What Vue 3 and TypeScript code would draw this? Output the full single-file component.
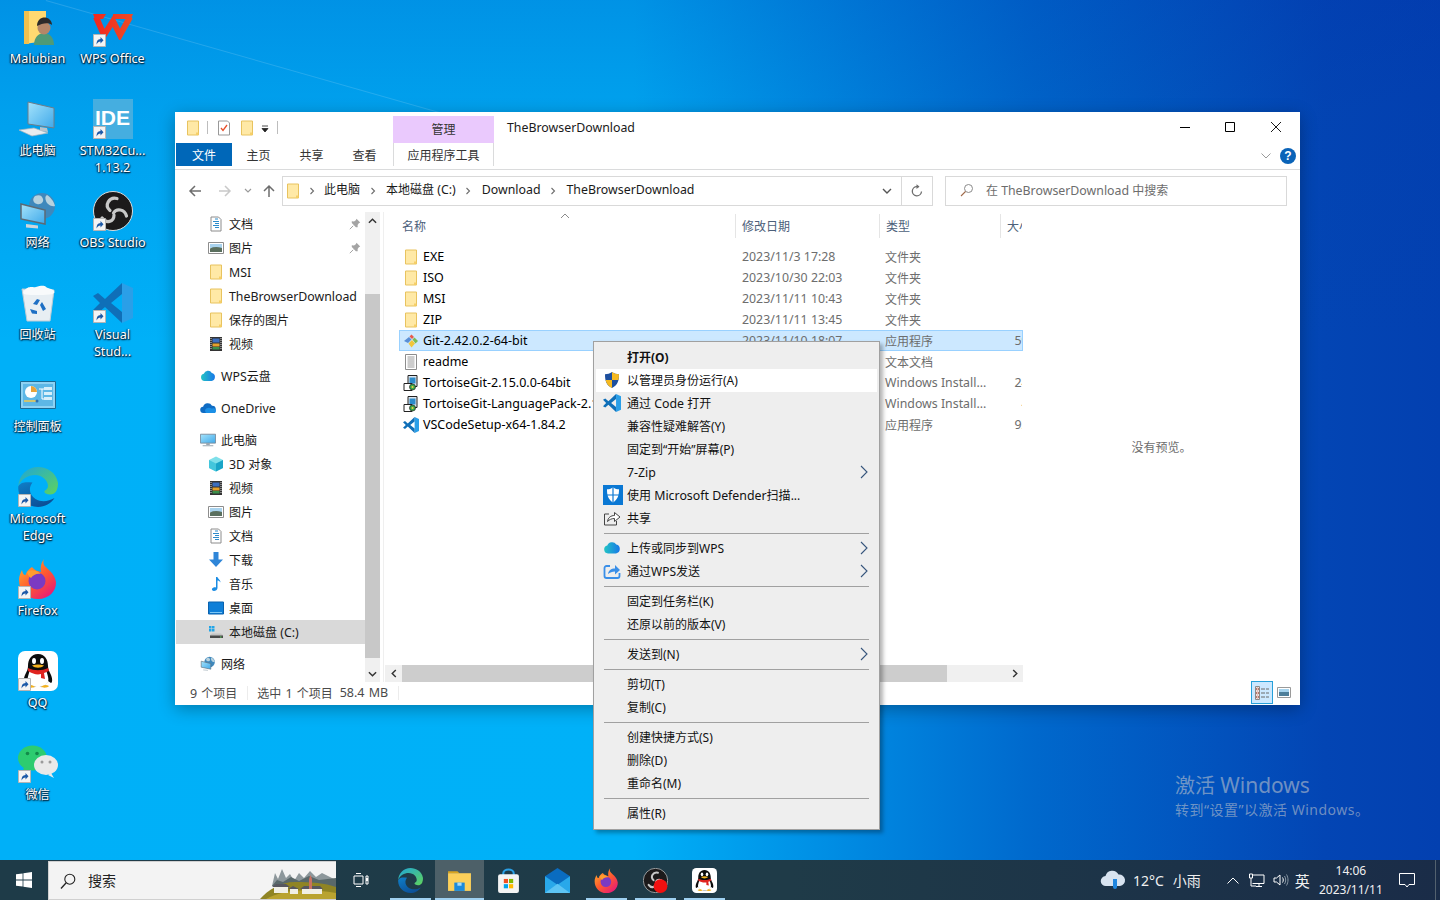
<script setup lang="ts">
interface DeskIcon { icon: string; label: string; link?: boolean }
interface NavItem { icon: string; label: string; level: number; gap?: boolean; pin?: boolean; active?: boolean }
interface FileRow { icon: string; name: string; date: string; type: string; size: string; selected?: boolean }
interface MenuItem { label?: string; icon?: string; bold?: boolean; hot?: boolean; more?: boolean; sep?: boolean }

const desktopIcons: DeskIcon[] = [
  { icon: "user-folder", label: "Malubian" },
  { icon: "pc", label: "此电脑" },
  { icon: "network", label: "网络" },
  { icon: "recycle", label: "回收站" },
  { icon: "control", label: "控制面板" },
  { icon: "edge", label: "Microsoft\nEdge", link: true },
  { icon: "firefox", label: "Firefox", link: true },
  { icon: "qq", label: "QQ", link: true },
  { icon: "wechat", label: "微信", link: true },
  { icon: "wps", label: "WPS Office", link: true },
  { icon: "ide", label: "STM32Cu...\n1.13.2", link: true },
  { icon: "obs", label: "OBS Studio", link: true },
  { icon: "vscode", label: "Visual\nStud...", link: true },
];

const navItems: NavItem[] = [
  { icon: "doc", label: "文档", level: 1, pin: true },
  { icon: "picture", label: "图片", level: 1, pin: true },
  { icon: "folder", label: "MSI", level: 1 },
  { icon: "folder", label: "TheBrowserDownload", level: 1 },
  { icon: "folder", label: "保存的图片", level: 1 },
  { icon: "film", label: "视频", level: 1 },
  { icon: "wps-cloud", label: "WPS云盘", level: 0, gap: true },
  { icon: "onedrive", label: "OneDrive", level: 0, gap: true },
  { icon: "pc-small", label: "此电脑", level: 0, gap: true },
  { icon: "cube", label: "3D 对象", level: 1 },
  { icon: "film", label: "视频", level: 1 },
  { icon: "picture", label: "图片", level: 1 },
  { icon: "doc", label: "文档", level: 1 },
  { icon: "download", label: "下载", level: 1 },
  { icon: "music", label: "音乐", level: 1 },
  { icon: "desk", label: "桌面", level: 1 },
  { icon: "drive", label: "本地磁盘 (C:)", level: 1, active: true },
  { icon: "network", label: "网络", level: 0, gap: true },
];

const files: FileRow[] = [
  { icon: "folder", name: "EXE", date: "2023/11/3 17:28", type: "文件夹", size: "" },
  { icon: "folder", name: "ISO", date: "2023/10/30 22:03", type: "文件夹", size: "" },
  { icon: "folder", name: "MSI", date: "2023/11/11 10:43", type: "文件夹", size: "" },
  { icon: "folder", name: "ZIP", date: "2023/11/11 13:45", type: "文件夹", size: "" },
  { icon: "git", name: "Git-2.42.0.2-64-bit", date: "2023/11/10 18:07", type: "应用程序", size: "59,802 KB", selected: true },
  { icon: "txt", name: "readme", date: "2023/11/10 18:07", type: "文本文档", size: "1 KB" },
  { icon: "msi", name: "TortoiseGit-2.15.0.0-64bit", date: "2023/11/10 18:07", type: "Windows Install...", size: "24,128 KB" },
  { icon: "msi", name: "TortoiseGit-LanguagePack-2.15.0.0-64bit", date: "2023/11/10 18:07", type: "Windows Install...", size: "4,096 KB" },
  { icon: "vscode", name: "VSCodeSetup-x64-1.84.2", date: "2023/11/10 18:07", type: "应用程序", size: "92,345 KB" },
];

const menu: MenuItem[] = [
  { label: "打开(O)", bold: true },
  { label: "以管理员身份运行(A)", icon: "uac", hot: true },
  { label: "通过 Code 打开", icon: "vscode" },
  { label: "兼容性疑难解答(Y)" },
  { label: "固定到“开始”屏幕(P)" },
  { label: "7-Zip", more: true },
  { label: "使用 Microsoft Defender扫描...", icon: "defender" },
  { label: "共享", icon: "share" },
  { sep: true },
  { label: "上传或同步到WPS", icon: "wps-cloud", more: true },
  { label: "通过WPS发送", icon: "wps-send", more: true },
  { sep: true },
  { label: "固定到任务栏(K)" },
  { label: "还原以前的版本(V)" },
  { sep: true },
  { label: "发送到(N)", more: true },
  { sep: true },
  { label: "剪切(T)" },
  { label: "复制(C)" },
  { sep: true },
  { label: "创建快捷方式(S)" },
  { label: "删除(D)" },
  { label: "重命名(M)" },
  { sep: true },
  { label: "属性(R)" },
];

const taskApps = [
  { icon: "edge", on: true },
  { icon: "explorer", on: true, active: true },
  { icon: "store", on: false },
  { icon: "mail", on: false },
  { icon: "firefox", on: true },
  { icon: "obs-rec", on: true },
  { icon: "qq", on: true },
];

// latin runs are a little larger than the CJK ones, as in YaHei UI
function parts(text: string) {
  const out: { t: string; lat: boolean }[] = [];
  for (const m of text.match(/[\x20-\x7e]+|[^\x20-\x7e]+/g) ?? []) {
    out.push({ t: m, lat: /^[\x20-\x7e]/.test(m) });
  }
  return out;
}
</script>

<template>
  <div class="desktop">
    <svg class="defs" aria-hidden="true">
      <defs>
        <linearGradient id="gEdge1" x1="0" y1="0" x2="1" y2="1"><stop offset="0" stop-color="#1fa6d8" /><stop offset="1" stop-color="#5fd35c" /></linearGradient>
        <linearGradient id="gEdge2" x1="0" y1="0" x2="0.6" y2="1"><stop offset="0" stop-color="#0f7fc8" /><stop offset="1" stop-color="#0c4f96" /></linearGradient>
        <linearGradient id="gFox" x1="0" y1="0" x2="0.8" y2="1"><stop offset="0" stop-color="#ffbd2e" /><stop offset="0.55" stop-color="#ff5a2e" /><stop offset="1" stop-color="#e6197a" /></linearGradient>
        <linearGradient id="gWps" x1="0" y1="0" x2="1" y2="0"><stop offset="0" stop-color="#f2281e" /><stop offset="1" stop-color="#ee4a26" /></linearGradient>
        <linearGradient id="gScreen" x1="0" y1="0" x2="1" y2="1"><stop offset="0" stop-color="#a5e3fb" /><stop offset="1" stop-color="#3fa9ea" /></linearGradient>
        <linearGradient id="gCloud" x1="0" y1="0" x2="1" y2="0"><stop offset="0" stop-color="#22c4c4" /><stop offset="1" stop-color="#1878e8" /></linearGradient>
      </defs>

      <symbol id="folder" viewBox="0 0 16 16">
        <path d="M2.500 1h11v14h-11z" fill="#ffe9a6" stroke="#e8c35f" />
        <path d="M11 12.500h2.500V15H11z" fill="#f6cf68" />
      </symbol>
      <symbol id="doc" viewBox="0 0 16 16">
        <path d="M3 1h7.500L13 3.500V15H3z" fill="#fff" stroke="#8c8c8c" />
        <path d="M7 3h3M5 5.500h6M7 7.500h4M5 9.500h6M7 11.500h4" stroke="#2d8ccb" />
      </symbol>
      <symbol id="picture" viewBox="0 0 16 16">
        <path d="M.5 2.500h15v11H.5z" fill="#fff" stroke="#8d8d8d" />
        <path d="M2 4h12v4H2z" fill="#a9d3ee" />
        <path d="M2 8.500q5-2.500 12-.5v4H2z" fill="#5a6f5e" />
      </symbol>
      <symbol id="film" viewBox="0 0 16 16">
        <path d="M2 1h12v14H2z" fill="#333" />
        <path d="M4.500 2.500h7v4h-7z" fill="#3c6fc0" />
        <path d="M4.500 7.500h7v3h-7z" fill="#e6a22c" />
        <path d="M4.500 11h7v2.500h-7z" fill="#3b8f4a" />
        <path d="M3 2v12" stroke="#ddd" stroke-dasharray="1 1" />
        <path d="M13 2v12" stroke="#ddd" stroke-dasharray="1 1" />
      </symbol>
      <symbol id="wps-cloud" viewBox="0 0 18 14">
        <path d="M5 12.500a4 4 0 0 1-.7-7.900 5 5 0 0 1 9-1.100 4.600 4.600 0 0 1-.3 9z" fill="url(#gCloud)" />
      </symbol>
      <symbol id="onedrive" viewBox="0 0 18 14">
        <path d="M4 12.500a3.500 3.500 0 0 1-.5-7 5.500 5.500 0 0 1 10-1 4 4 0 0 1 .5 8z" fill="#0f6cc4" />
        <path d="M7 12.500a3 3 0 0 1 0-5 6 6 0 0 1 6 0h1a3 3 0 0 1 3 5z" fill="#1b8fe6" />
      </symbol>
      <symbol id="pc-small" viewBox="0 0 18 16">
        <path d="M.5 1.500h17v10H.5z" fill="url(#gScreen)" stroke="#7a8b99" />
        <path d="M7 11.500h4v2H7zM3 14h12v1H3z" fill="#9aa6b0" />
      </symbol>
      <symbol id="cube" viewBox="0 0 16 16">
        <path d="M8 .5 15 4v8l-7 3.500L1 12V4z" fill="#7fe0ea" />
        <path d="M8 7.500 15 4v8l-7 3.500z" fill="#19a5c8" />
        <path d="M8 7.500v8L1 12V4z" fill="#43c6dc" />
      </symbol>
      <symbol id="download" viewBox="0 0 16 16">
        <path d="M5.500 0h5v7.500H15L8 15 1 7.500h4.500z" fill="#2f86d8" />
      </symbol>
      <symbol id="music" viewBox="0 0 16 16">
        <path d="M8 1h1.500c.3 2 3 2.500 3 5.500-1-1.500-2-2-3-2v7.500c0 2-2 3-3.500 3S3.500 14 4 12.800c.5-1 2.500-1.800 4-1.300z" fill="#1b8ce3" />
      </symbol>
      <symbol id="desk" viewBox="0 0 16 16">
        <path d="M.5 2h15v12H.5z" fill="#0f7fd8" stroke="#0a62ae" />
        <path d="M2 12.500h12" stroke="#7cc7f5" />
      </symbol>
      <symbol id="drive" viewBox="0 0 16 16">
        <path d="M1 2h2.500v2.500H1zM4 2h2.500v2.500H4zM1 5h2.500v2.500H1zM4 5h2.500v2.500H4z" fill="#22a5e8" />
        <path d="M2 11l2-1.500h9l2 1.500v3H2z" fill="#c4c4c4" />
        <path d="M2 11.500h13V14H2z" fill="#4a4a4a" />
        <path d="M12 12.500h1.500v1H12z" fill="#5ad45a" />
      </symbol>
      <symbol id="git" viewBox="0 0 16 16">
        <path d="M8.500 1.500 11 4 9 6 6.500 3.500z" fill="#e85a4a" />
        <path d="M11.500 4.500 15 8l-2.500 2.500L9.500 6.500z" fill="#7dbb55" />
        <path d="M6 4 8.500 6.500 5 10 1 8z" fill="#5a8fd6" />
        <path d="M9 7l3 3.500L8.500 14.500 5.500 10.500z" fill="#f2c63c" />
      </symbol>
      <symbol id="txt" viewBox="0 0 16 16">
        <path d="M2.500 .5h11v15h-11z" fill="#fff" stroke="#8c8c8c" />
        <path d="M4.500 3h7M4.500 5h7M4.500 7h7M4.500 9h7M4.500 11h7M4.500 13h7" stroke="#9a9a9a" />
      </symbol>
      <symbol id="msi" viewBox="0 0 16 16">
        <path d="M5 .5h9v11H5z" fill="#dfe6ee" stroke="#222" />
        <path d="M6.500 2.500h6v6h-6z" fill="#2d8ccb" />
        <path d="M1 8.500h8v7H1z" fill="#fff" stroke="#222" />
        <circle cx="9.500" cy="12" r="3" fill="#3ea84a" stroke="#222" stroke-width=".7" />
        <circle cx="9.500" cy="12" r="1" fill="#f4d03f" />
      </symbol>
      <symbol id="vscode" viewBox="0 0 40 40">
        <path d="M29 0 40 5v30l-11 5z" fill="#2a9fe8" />
        <path d="M29 0 12 16 5 10 0 13l7 7-7 7 5 3 7-6 17 16V29L18 20l11-9z" fill="#0f6fb8" />
      </symbol>
      <symbol id="uac" viewBox="0 0 18 18">
        <path d="M9 1c2.200 1.600 4.500 2.200 7 2.200 0 6-1 10.800-7 13.800C3 14 2 9.200 2 3.200 4.500 3.200 6.800 2.600 9 1z" fill="#1d4f9e" />
        <path d="M9 1c2.200 1.600 4.500 2.200 7 2.200 0 2-.1 3.900-.6 5.800H9zM9 9v8c-3.200-1.600-5-3.700-5.900-6.200L2.600 9z" fill="#f5b921" />
      </symbol>
      <symbol id="defender" viewBox="0 0 20 20">
        <path d="M0 0h20v20H0z" fill="#0a78d4" />
        <path d="M10 2.500c2 1.300 4 1.800 6 1.800 0 5.500-.8 10-6 13.200C4.800 14.300 4 9.800 4 4.300c2 0 4-.5 6-1.800z" fill="#fff" />
        <path d="M9.400 2.500h1.200v15H9.400zM4 9.400h12v1.200H4z" fill="#0a78d4" />
      </symbol>
      <symbol id="share" viewBox="0 0 18 18">
        <path d="M6 5H1.500v11h12v-4" fill="none" stroke="#444" />
        <path d="M4.500 12.500c.5-4 3.500-6 7-6V3.500L17 8l-5.500 4.500v-3c-3 0-5 1-7 3z" fill="#fff" stroke="#444" />
      </symbol>
      <symbol id="wps-send" viewBox="0 0 18 18">
        <path d="M7 4H3.500a2 2 0 0 0-2 2v8a2 2 0 0 0 2 2h11a2 2 0 0 0 2-2v-3" fill="none" stroke="#3a8fe8" stroke-width="1.800" />
        <path d="M5 12c.5-3.500 3-5.500 7-5.500V3l5 5-5 4.500V9.500c-3 0-5 1-7 2.500z" fill="#3a8fe8" />
      </symbol>

      <symbol id="user-folder" viewBox="0 0 40 40">
        <path d="M6 4h22v30L6 37z" fill="#ffd971" />
        <path d="M6 4h5v33H6z" fill="#f1c04e" />
        <path d="M16 38c0-8 5-12 10-12s10 4 10 12z" fill="#4f9a77" />
        <circle cx="26" cy="21" r="6.500" fill="#b48669" />
        <path d="M19 19c0-6 4-8.500 7.500-8.500S34 13 34 18c-3-3-10-2-15 1z" fill="#2c2a2a" />
      </symbol>
      <symbol id="pc" viewBox="0 0 40 40">
        <path d="M10 3l26 6v20l-26-4z" fill="url(#gScreen)" stroke="#6d7d8a" />
        <path d="M22 28l7 1 1 4-8-1z" fill="#b9c4cc" />
        <path d="M1 31l15-2 14 5-16 3z" fill="#e8ecef" stroke="#aab4bb" stroke-width=".7" />
      </symbol>
      <symbol id="network" viewBox="0 0 40 40">
        <circle cx="24" cy="15" r="13" fill="#3f88bc" />
        <path d="M17 5c5-2 7 0 8 3s-2 6-6 5-5-5-2-8zM29 4c3 2 7 6 8 11-4 1-8-2-9-5s-1-5 1-6z" fill="#b7d2df" />
        <path d="M3 13l24 6v14L3 28z" fill="url(#gScreen)" stroke="#5c6a75" stroke-width="1.500" />
        <path d="M8 33l12 1.500v3L8 36.500z" fill="#cdd5da" />
      </symbol>
      <symbol id="recycle" viewBox="0 0 40 40">
        <path d="M4 6l32 1-4 31H9z" fill="#e7eef3" stroke="#bfcbd3" />
        <path d="M6 8c5-6 8-3 12-4s8-2 10 0 6 1 8 4-3 4-15 4S3 12 6 8z" fill="#f8fafb" />
        <path d="M15 21l4-5 3 1-3 5zM24 19l4 7-3 2-3-6zM12 26l7 2v3l-5-.5zM19 22l-5 2" fill="#1d6fc4" />
      </symbol>
      <symbol id="control" viewBox="0 0 36 28">
        <path d="M.5.5h35v27H.5z" fill="#8ed2f4" stroke="#1c6a94" />
        <path d="M3 3h30v22H3z" fill="#5db7e6" />
        <circle cx="11" cy="11" r="6" fill="#fff" />
        <path d="M11 11V5a6 6 0 0 1 6 6z" fill="#e8a33a" />
        <path d="M4 20h14" stroke="#f2c94c" stroke-width="1.500" />
        <circle cx="17" cy="20" r="1.500" fill="#2d6fb0" />
        <path d="M24 6h8v3h-8zM24 11h8v3h-8zM24 16h8v3h-8z" fill="#d7effa" />
        <path d="M19 8h5M22 8v10h2" stroke="#fff" fill="none" />
      </symbol>
      <symbol id="edge" viewBox="0 0 40 40">
        <path d="M20 0C9 0 1 8 .3 19.500 3 12 10 8 17 8c8 0 13 6 13 11 0 2-1.500 3.500-3 4.500-1 1-.8 2.200.8 3 4 2 9.200 1 11-3.500 1-2.800 1.500-5.500 1-8C38 5.500 29 0 20 0z" fill="url(#gEdge1)" />
        <path d="M.3 19.500C-.5 31 9 40 20 40c7 0 13-3.500 16.500-9-6 3.500-13 4.500-19 1-6-3.800-7.500-11-3-16.500C8 15 3 14.500.3 19.500z" fill="url(#gEdge2)" />
      </symbol>
      <symbol id="firefox" viewBox="0 0 40 40">
        <path d="M26 0c-2 6 1 7 6 12 3 3 5 6 6 11 .5 9-7 17-18 17C9 40 1 32 1 21c0-4 1.500-7 3-10 .5 3 1.500 5 3.500 5 1-3 3-6 6.500-8 3 4 6 4 9 5-1-5 0-9 3-13z" fill="url(#gFox)" />
        <circle cx="19" cy="22" r="8.500" fill="#7b3ac2" />
        <path d="M9 13c4-3 10-2 14 2-4-1-8 1-10 4-2-1-3-3-4-6z" fill="#ff9d2f" />
      </symbol>
      <symbol id="qq" viewBox="0 0 40 40">
        <rect width="40" height="40" rx="7" fill="#fff" />
        <path d="M20 3c7 0 10 6 10 12 0 3 1 5 3 9 2 5 1 8 0 8l-3-2c-2 5-6 6-10 6s-8-1-10-6l-3 2c-1 0-2-3 0-8 2-4 3-6 3-9 0-6 3-12 10-12z" fill="#0c0c0c" />
        <path d="M12 19c6 3 10 3 16 0 2 6 3 9 2 12-2 4-6 5-10 5s-8-1-10-5c-1-3 0-6 2-12z" fill="#fff" />
        <path d="M10 17c6 3 14 3 20 0l1 3c-2 1-3 1-5 2l1 6-4-1v-4c-4 1-8 0-13-3z" fill="#e0231f" />
        <ellipse cx="16" cy="10" rx="2" ry="3" fill="#fff" />
        <ellipse cx="24" cy="10" rx="2" ry="3" fill="#fff" />
        <path d="M14 14.500c4-1.500 8-1.500 12 0-3 3-9 3-12 0z" fill="#f4b21e" />
        <path d="M9 35c3-2 6-1 8 1-2 1-7 1-8-1zM23 36c2-2 5-3 8-1-1 2-6 2-8 1z" fill="#f4b21e" />
      </symbol>
      <symbol id="wechat" viewBox="0 0 40 40">
        <ellipse cx="14.500" cy="15" rx="14.500" ry="12.500" fill="#2dcc70" />
        <path d="M6 23l-1 6 7-3z" fill="#2dcc70" />
        <circle cx="9.500" cy="10.500" r="1.800" fill="#128a4a" />
        <circle cx="19" cy="10.500" r="1.800" fill="#128a4a" />
        <ellipse cx="28" cy="22" rx="12" ry="10" fill="#e9e9e9" />
        <path d="M33 30l3 5-6-3z" fill="#e9e9e9" />
        <circle cx="24" cy="19" r="1.500" fill="#9a9a9a" />
        <circle cx="32" cy="19" r="1.500" fill="#9a9a9a" />
      </symbol>
      <symbol id="wps" viewBox="0 0 40 26">
        <path d="M3 3l8 18 9-14 7 14 10-18" fill="none" stroke="url(#gWps)" stroke-width="6" />
        <path d="M0 0h13l-3 5H2zM20 0h20l-2 5H20z" fill="url(#gWps)" />
      </symbol>
      <symbol id="obs" viewBox="0 0 40 40">
        <circle cx="20" cy="20" r="19.500" fill="#1c1a1b" stroke="#dcdcdc" />
        <g fill="none" stroke="#c8c8c8" stroke-width="3.200" stroke-linecap="round">
          <path d="M24 7.500c-8-2-13 7-7 12" />
          <path d="M33.500 25c-2-7-10-8-13-3" />
          <path d="M9 27c4 6 12 4 12-3" />
        </g>
      </symbol>
      <symbol id="obs-rec" viewBox="0 0 40 40">
        <circle cx="20" cy="20" r="19.500" fill="#1c1a1b" stroke="#dcdcdc" />
        <g fill="none" stroke="#c8c8c8" stroke-width="3.200" stroke-linecap="round">
          <path d="M24 7.500c-8-2-13 7-7 12" />
          <path d="M33.500 25c-2-7-10-8-13-3" />
          <path d="M9 27c4 6 12 4 12-3" />
        </g>
        <circle cx="28" cy="29" r="11" fill="#f01010" />
      </symbol>
      <symbol id="explorer" viewBox="0 0 24 24">
        <path d="M1 3h9l2 2H1z" fill="#d9a520" />
        <path d="M1 5h22v17H1z" fill="#fcd05a" />
        <path d="M7 14h10v8H7z" fill="#1c8bdc" />
        <path d="M10 14h4v3h-4z" fill="#a7dcf8" />
      </symbol>
      <symbol id="store" viewBox="0 0 24 24">
        <path d="M7 8V5a5 3.500 0 0 1 10 0v3" fill="none" stroke="#2aa0e6" stroke-width="2" />
        <rect x="2" y="6" width="20" height="18" rx="2" fill="#f4f4f4" />
        <path d="M7.500 10.500h4v4h-4z" fill="#f25022" />
        <path d="M12.500 10.500h4v4h-4z" fill="#7fba00" />
        <path d="M7.500 15.500h4v4h-4z" fill="#00a4ef" />
        <path d="M12.500 15.500h4v4h-4z" fill="#ffb900" />
      </symbol>
      <symbol id="mail" viewBox="0 0 24 24">
        <path d="M0 8l12-8 12 8v1l-12 8L0 9z" fill="#0a6cc0" />
        <path d="M0 8l12 8 12-8v16H0z" fill="#29a8ea" />
        <path d="M0 24l12-9 12 9z" fill="#5dc4f4" />
      </symbol>
      <symbol id="win" viewBox="0 0 16 16">
        <path d="M0 2.300 6.600 1.400v6.200H0zM7.400 1.300 16 0v7.600H7.400zM0 8.400h6.600v6.200L0 13.700zM7.400 8.400H16V16l-8.600-1.200z" fill="#fff" />
      </symbol>
      <symbol id="link" viewBox="0 0 13 13">
        <path d="M.5.500h12v12H.5z" fill="#f4f4f4" stroke="#b5b5b5" />
        <path d="M3.500 10.500c0-3.500 1-5.200 4-5.500V3l3 3.200-3 3.300V7.500c-1.700 0-3 1-4 3z" fill="#1d5aa8" />
      </symbol>
      <symbol id="pin" viewBox="0 0 12 12">
        <path d="M7.500 .8 11.200 4.500 9.800 5.200 8.600 7 8.700 9.200 6.900 9.200 2.800 5.100 2.800 3.300 5 3.400 6.800 2.200z" fill="#a4a4a4" />
        <path d="M.8 11.200 4.200 7.800" stroke="#a4a4a4" />
      </symbol>
    </svg>

    <i class="ray" />

    <div class="icons">
      <div v-for="d in desktopIcons" :key="d.label" class="desk-icon">
        <div class="desk-pic" :class="{ ctl: d.icon === 'control', wp: d.icon === 'wps' }">
          <div v-if="d.icon === 'ide'" class="ide">IDE</div>
          <svg v-else><use :href="'#' + d.icon" /></svg>
          <svg v-if="d.link" class="badge"><use href="#link" /></svg>
        </div>
        <div class="desk-label"><span v-for="p in parts(d.label)" :key="p.t" :class="{ lat: p.lat }">{{ p.t }}</span></div>
      </div>
    </div>

    <div class="watermark">
      <div class="wm-big">激活 <span>Windows</span></div>
      <div class="wm-small">转到“设置”以激活 Windows。</div>
    </div>

    <section class="win">
      <div class="title-row">
        <div class="qat">
          <svg class="i16"><use href="#folder" /></svg>
          <i class="qat-sep" />
          <svg class="i16 doc-check" viewBox="0 0 16 16">
            <path d="M2.500 1h9l2 2v12h-11z" fill="#fff" stroke="#999" />
            <path d="M5 8l2 2.500L11 5" fill="none" stroke="#e8502a" stroke-width="1.300" />
          </svg>
          <svg class="i16"><use href="#folder" /></svg>
          <svg class="qat-drop" viewBox="0 0 8 8"><path d="M1 1h6M1 3.500h6L4 7z" stroke="#222" fill="#222" stroke-width=".8" /></svg>
          <i class="qat-sep" />
        </div>
        <div class="ctx-tab">管理</div>
        <div class="title lat">TheBrowserDownload</div>
        <div class="controls">
          <svg viewBox="0 0 10 10"><path d="M0 5.500h10" stroke="#000" /></svg>
          <svg viewBox="0 0 10 10"><path d="M.5.500h9v9h-9z" fill="none" stroke="#000" /></svg>
          <svg viewBox="0 0 10 10"><path d="M0 0l10 10M10 0L0 10" stroke="#000" stroke-width=".9" /></svg>
        </div>
      </div>

      <div class="tabs">
        <div class="tab tab-file">文件</div>
        <div class="tab">主页</div>
        <div class="tab">共享</div>
        <div class="tab">查看</div>
        <div class="tab tool">应用程序工具</div>
        <svg class="fold" viewBox="0 0 10 6"><path d="M.5.500 5 5 9.500.500" fill="none" stroke="#9a9a9a" /></svg>
        <div class="help">?</div>
      </div>

      <div class="addr-row">
        <div class="nav-btns">
          <svg class="nb" viewBox="0 0 14 14"><path d="M13 7H2M7 2 2 7l5 5" fill="none" stroke="#6d6d6d" stroke-width="1.500" /></svg>
          <svg class="nb" viewBox="0 0 14 14"><path d="M1 7h11M7 2l5 5-5 5" fill="none" stroke="#c9c9c9" stroke-width="1.500" /></svg>
          <svg class="nb small" viewBox="0 0 8 6"><path d="M1 1l3 3 3-3" fill="none" stroke="#9a9a9a" stroke-width="1.200" /></svg>
          <svg class="nb" viewBox="0 0 14 14"><path d="M7 13V2M2 7l5-5 5 5" fill="none" stroke="#6d6d6d" stroke-width="1.500" /></svg>
        </div>
        <div class="address">
          <svg class="i16 addr-folder"><use href="#folder" /></svg>
          <template v-for="c in ['此电脑', '本地磁盘 (C:)', 'Download', 'TheBrowserDownload']" :key="c">
            <svg class="crumb-arrow" viewBox="0 0 6 8"><path d="M1.500 1 4.500 4l-3 3" fill="none" stroke="#6d6d6d" stroke-width="1.100" /></svg>
            <span class="crumb"><span v-for="p in parts(c)" :key="p.t" :class="{ lat: p.lat }">{{ p.t }}</span></span>
          </template>
          <svg class="addr-drop" viewBox="0 0 10 6"><path d="M1 1l4 4 4-4" fill="none" stroke="#555" stroke-width="1.400" /></svg>
          <div class="refresh">
            <svg viewBox="0 0 14 14"><path d="M11.500 7.500A4.600 4.600 0 1 1 7 2.600h2" fill="none" stroke="#6d6d6d" stroke-width="1.300" /><path d="M6.500 .3 9.500 2.600 6.500 5z" fill="#6d6d6d" /></svg>
          </div>
        </div>
        <div class="search">
          <svg class="search-i" viewBox="0 0 14 14"><circle cx="8.500" cy="5.500" r="4" fill="none" stroke="#8a8a8a" /><path d="M5.500 8.500 1 13" stroke="#a06a4a" stroke-width="1.100" /></svg>
          <span>在 </span><span class="lat">TheBrowserDownload</span><span> 中搜索</span>
        </div>
      </div>

      <div class="body">
        <nav class="nav">
          <div v-for="(n, i) in navItems" :key="i" class="nav-row" :class="{ gap: n.gap, active: n.active, l1: n.level === 1 }">
            <svg class="i16"><use :href="'#' + n.icon" /></svg>
            <span class="nav-text"><span v-for="p in parts(n.label)" :key="p.t" :class="{ lat: p.lat }">{{ p.t }}</span></span>
            <svg v-if="n.pin" class="pin"><use href="#pin" /></svg>
          </div>
        </nav>
        <div class="vbar">
          <div class="vbar-btn"><svg viewBox="0 0 10 6"><path d="M1 5l4-4 4 4" fill="none" stroke="#333" stroke-width="1.600" /></svg></div>
          <div class="vbar-track"><div class="vbar-thumb" /></div>
          <div class="vbar-btn"><svg viewBox="0 0 10 6"><path d="M1 1l4 4 4-4" fill="none" stroke="#333" stroke-width="1.600" /></svg></div>
        </div>
        <div class="rule" />

        <div class="list">
          <div class="list-head">
            <div class="col name">名称</div>
            <div class="col date">修改日期</div>
            <div class="col type">类型</div>
            <div class="col size">大小</div>
            <svg class="sort" viewBox="0 0 10 6"><path d="M1 5l4-4 4 4" fill="none" stroke="#8a8a8a" /></svg>
          </div>
          <div class="list-body">
            <div v-for="f in files" :key="f.name" class="frow" :class="{ sel: f.selected }">
              <div class="f-name">
                <svg class="i16"><use :href="'#' + f.icon" /></svg>
                <span class="lat">{{ f.name }}</span>
              </div>
              <div class="f-date lat">{{ f.date }}</div>
              <div class="f-type"><span v-for="p in parts(f.type)" :key="p.t" :class="{ lat: p.lat }">{{ p.t }}</span></div>
              <div class="f-size"><span class="lat">{{ f.size }}</span></div>
            </div>
          </div>
          <div class="hbar">
            <div class="hbar-btn"><svg viewBox="0 0 6 10"><path d="M5 1 1 5l4 4" fill="none" stroke="#333" stroke-width="1.600" /></svg></div>
            <div class="hbar-track"><div class="hbar-thumb" /></div>
            <div class="hbar-btn"><svg viewBox="0 0 6 10"><path d="M1 1l4 4-4 4" fill="none" stroke="#333" stroke-width="1.600" /></svg></div>
          </div>
        </div>

        <div class="preview">没有预览。</div>
      </div>

      <div class="status">
        <span class="st"><span class="lat">9</span> 个项目</span>
        <i class="st-sep" />
        <span class="st">选中 <span class="lat">1</span> 个项目</span>
        <span class="st lat st-size">58.4 MB</span>
        <i class="st-sep" />
        <div class="views">
          <div class="view on">
            <svg viewBox="0 0 16 16">
              <path d="M1.500 1.500h4v13h-4z" fill="#fff" stroke="#8a8a8a" />
              <path d="M2.500 3h2v2h-2zM2.500 7h2v2h-2zM2.500 11h2v2h-2z" fill="none" stroke="#a04a3a" stroke-width=".7" />
              <path d="M7 4h4M12 4h3M7 8h4M12 8h3M7 12h4M12 12h3" stroke="#6b6b6b" />
            </svg>
          </div>
          <div class="view">
            <svg viewBox="0 0 14 11"><path d="M.5.500h13v10H.5z" fill="#fff" stroke="#9a9a9a" /><path d="M2 2h10v3H2z" fill="#a7d4ee" /><path d="M2 5h10v4H2z" fill="#4f7f9a" /></svg>
          </div>
        </div>
      </div>
    </section>

    <div class="menu">
      <template v-for="(m, i) in menu" :key="i">
        <div v-if="m.sep" class="sep" />
        <div v-else class="item" :class="{ bold: m.bold, hot: m.hot }">
          <svg v-if="m.icon" class="m-icon" :class="m.icon"><use :href="'#' + m.icon" /></svg>
          <span class="m-text"><span v-for="p in parts(m.label ?? '')" :key="p.t" :class="{ lat: p.lat && !m.bold && p.t.length > 3 }">{{ p.t }}</span></span>
          <svg v-if="m.more" class="m-more" viewBox="0 0 8 14"><path d="M1 1l6 6-6 6" fill="none" stroke="#36557c" stroke-width="1.100" /></svg>
        </div>
      </template>
    </div>

    <footer class="taskbar">
      <div class="start"><svg><use href="#win" /></svg></div>
      <div class="t-search">
        <svg class="t-glass" viewBox="0 0 16 16"><circle cx="9.800" cy="6.200" r="5" fill="none" stroke="#222" stroke-width="1.100" /><path d="M6.200 9.800 1 15.500" stroke="#222" stroke-width="1.300" /></svg>
        <span class="t-word">搜索</span>
        <svg class="scene" viewBox="0 0 78 39">
          <path d="M14 26l3-13 3 6 4-10 4 9 4-4 4 7 5-8 5 5 6-7 6 6 6-4 14 7v9z" fill="#8d979b" />
          <path d="M14 26l5-6 6 2 8-5 8 4 10-5 10 4 17-2v12z" fill="#59686a" />
          <path d="M2 39C10 30 22 22 37 22c16 0 30 1 41 5v12z" fill="#8f8424" />
          <path d="M8 39c16-9 40-11 70-6v6z" fill="#b9a330" />
          <path d="M16 27h14v6H16zM32 29h8v5h-8zM44 29h20v5H44z" fill="#f0efe6" />
          <path d="M14 27l4-3h10l4 3zM30 29l5-3 6 3zM42 29l4-3h16l3 3z" fill="#57575f" />
          <path d="M51 19l1.500-4 1.500 4v10h-3z" fill="#c97060" />
        </svg>
      </div>
      <div class="tb-btn tv-btn">
        <svg class="tv" viewBox="0 0 16 16"><path d="M1 4h9v8H1zM3 1.500h5M3 14.500h5M13 4h2v8h-2z" fill="none" stroke="#fff" /><path d="M13 6h2v3h-2z" fill="#fff" /></svg>
      </div>
      <div v-for="a in taskApps" :key="a.icon" class="tb-btn" :class="{ run: a.on, active: a.active }">
        <svg class="app"><use :href="'#' + a.icon" /></svg>
      </div>
      <div class="tray">
        <svg class="weather" viewBox="0 0 26 20"><path d="M6 16a5 5 0 0 1-.5-10 7 7 0 0 1 13-1.500A5.500 5.500 0 0 1 20 16z" fill="#d7e3f0" /><path d="M13 9h4v8a2 2 0 0 1-4 0z" fill="#1f86e0" /></svg>
        <span class="tr-temp">12°C</span>
        <span class="tr-rain">小雨</span>
        <svg class="tr-up" viewBox="0 0 12 7"><path d="M.5 6.500 6 1l5.500 5.500" fill="none" stroke="#fff" /></svg>
        <svg class="tr-net" viewBox="0 0 16 16"><path d="M.5 2h3v4h-3zM3.500 3H15v8.500H3.500M7 14.500h6M10 11.500v3M2 6v8h5" fill="none" stroke="#fff" /></svg>
        <svg class="tr-vol" viewBox="0 0 16 16"><path d="M1 6h2.500L7 3v10L3.500 10H1z" fill="none" stroke="#fff" /><path d="M9.500 5.500c1 1.500 1 3.500 0 5" fill="none" stroke="#fff" /><path d="M11.500 4c1.600 2.500 1.600 5.500 0 8M13.500 2.500c2 3.500 2 7.500 0 11" fill="none" stroke="#8a98a5" /></svg>
        <span class="tr-ime">英</span>
        <div class="clock"><div>14:06</div><div>2023/11/11</div></div>
        <svg class="tr-note" viewBox="0 0 16 16"><path d="M.5 1.500h15v11H10L8 15l-2-2.500H.5z" fill="none" stroke="#fff" /></svg>
        <i class="show-desktop" />
      </div>
    </footer>
  </div>
</template>

<style>
html,
body {
  margin: 0;
  overflow: hidden;
}
</style>

<style scoped>
.desktop {
  position: relative;
  width: 1440px;
  height: 900px;
  overflow: hidden;
  font-family: "Noto Sans", "Noto Sans CJK SC", sans-serif;
  font-size: 12px;
  color: #1a1a1a;
  background:
    linear-gradient(180deg, rgba(0, 50, 170, 0.24) 0, rgba(0, 60, 170, 0.14) 12%, transparent 38%),
    linear-gradient(90deg, #00b0f8 0, #00b1f8 44%, #0082dd 62%, #0068cc 72%, #0345b4 92%, #0340b0 100%);
}

.defs {
  position: absolute;
  width: 0;
  height: 0;
}

.ray {
  position: absolute;
  left: 46px;
  top: 0;
  width: 420px;
  height: 1px;
  transform: rotate(15.900deg);
  transform-origin: 0 0;
  background: rgba(255, 255, 255, 0.14);
}

.lat {
  font-family: "Noto Sans", sans-serif;
  font-size: 12.350px;
}

.icons {
  position: absolute;
  left: 0;
  top: 1px;
  display: grid;
  grid-template-columns: 75px 75px;
  grid-template-rows: repeat(9, 92px);
  grid-auto-flow: column;
}

.desk-icon {
  display: flex;
  flex-direction: column;
  align-items: center;
  padding-top: 6px;
}

.desk-pic {
  position: relative;
  width: 40px;
  height: 40px;
}

.desk-pic > svg:first-child {
  width: 40px;
  height: 40px;
}

.desk-pic.ctl > svg:first-child {
  width: 36px;
  height: 28px;
  margin: 6px 0 0 2px;
}

.desk-pic.wp > svg:first-child {
  height: 26px;
  margin-top: 7px;
}

.ide {
  width: 40px;
  height: 40px;
  padding-top: 5px;
  box-sizing: border-box;
  background: #45aee0;
  color: #fff;
  font: 700 21px/28px "Liberation Sans", sans-serif;
  text-align: center;
}

.badge {
  position: absolute;
  left: 0;
  bottom: 0;
  width: 13px;
  height: 13px;
}

.desk-label {
  width: 74px;
  margin-top: 3px;
  color: #fff;
  line-height: 17px;
  text-align: center;
  white-space: pre-line;
  text-shadow: 0 1px 2px #002a44, 1px 1px 1px #00304e, -1px 0 1px #00304e;
}

.desk-label .lat {
  font-size: 12.600px;
}

.watermark {
  position: absolute;
  left: 1175px;
  top: 771px;
  color: rgba(205, 205, 205, 0.55);
}

.wm-big {
  font-size: 20px;
  line-height: 28px;
}

.wm-big span {
  font-size: 21px;
}

.wm-small {
  margin-top: 1px;
  font-size: 14px;
  line-height: 18px;
  letter-spacing: 0.5px;
}

/* explorer window */
.win {
  position: absolute;
  left: 175px;
  top: 112px;
  width: 1125px;
  height: 593px;
  display: flex;
  flex-direction: column;
  background: #fff;
  box-shadow: 0 4px 16px rgba(0, 0, 0, 0.3);
}

.i16 {
  width: 16px;
  height: 16px;
  flex: none;
}

.title-row {
  display: flex;
  height: 31px;
  flex: none;
}

.qat {
  display: flex;
  align-items: center;
  width: 218px;
  height: 31px;
  padding-left: 10px;
  box-sizing: border-box;
}

.qat-sep {
  width: 1px;
  height: 13px;
  margin: 0 8px 0 6px;
  background: #bdbdbd;
}

.doc-check {
  margin-right: 7px;
}

.qat-drop {
  width: 8px;
  height: 8px;
  margin: 3px 0 0 6px;
}

.qat-drop + .qat-sep {
  margin-left: 8px;
}

.ctx-tab {
  width: 101px;
  height: 27px;
  margin-top: 4px;
  background: #eac9fd;
  line-height: 28px;
  text-align: center;
  color: #333;
}

.title {
  margin-left: 13px;
  line-height: 32px;
  color: #1a1a1a;
}

.controls {
  display: flex;
  align-items: center;
  margin-left: auto;
  height: 30px;
  padding-right: 19px;
  gap: 35px;
}

.controls svg {
  width: 10px;
  height: 10px;
}

.controls svg:last-child {
  margin-left: 1px;
}

.tabs {
  display: flex;
  flex: none;
  height: 26px;
  padding-left: 1px;
  border-bottom: 1px solid #dadbdc;
}

.tab {
  width: 53px;
  height: 23px;
  line-height: 25px;
  text-align: center;
  color: #333;
}

.tab.tab-file {
  width: 56px;
  background: #0067b8;
  color: #fff;
}

.tab.tool {
  width: 101px;
  box-sizing: border-box;
  margin-left: 2px;
  border: 1px solid #dadbdc;
  border-width: 0 1px;
}

.fold {
  width: 10px;
  height: 6px;
  margin: 10px 0 0 auto;
}

.help {
  width: 16px;
  height: 16px;
  margin: 5px 4px 0 9px;
  border-radius: 50%;
  background: #0a63b8;
  color: #fff;
  font: 700 12px/16px "Liberation Sans", sans-serif;
  text-align: center;
}

.addr-row {
  display: flex;
  flex: none;
  height: 30px;
  margin-top: 6px;
  padding-left: 5px;
}

.nav-btns {
  display: grid;
  grid-template-columns: 30px 30px 16px 26px;
  align-items: center;
  justify-items: center;
  width: 102px;
}

.nb {
  width: 14px;
  height: 14px;
}

.nb.small {
  width: 8px;
  height: 6px;
}

.address {
  display: flex;
  align-items: center;
  box-sizing: border-box;
  width: 651px;
  height: 30px;
  border: 1px solid #d9d9d9;
  padding-left: 2px;
}

.crumb-arrow {
  width: 6px;
  height: 8px;
  margin: 0 10.500px 0 9.500px;
}

.addr-folder + .crumb-arrow {
  margin-left: 8px;
  margin-right: 9px;
}

.crumb {
  white-space: pre;
  padding-bottom: 4px;
}

.addr-drop {
  width: 10px;
  height: 6px;
  margin-left: auto;
  margin-right: 9px;
}

.refresh {
  display: flex;
  align-items: center;
  justify-content: center;
  width: 30px;
  height: 28px;
  border-left: 1px solid #d9d9d9;
}

.refresh svg {
  width: 14px;
  height: 14px;
}

.search {
  display: flex;
  align-items: center;
  box-sizing: border-box;
  width: 342px;
  height: 30px;
  margin-left: 12px;
  border: 1px solid #d9d9d9;
  color: #6d6d6d;
  white-space: pre;
  padding: 0 0 2px 14px;
}

.search-i {
  width: 14px;
  height: 14px;
  margin-right: 12px;
}

.body {
  display: flex;
  flex: 1;
  min-height: 0;
  margin-top: 6px;
}

.nav {
  width: 189px;
  margin-left: 1px;
  flex: none;
  overflow: hidden;
}

.nav-row {
  display: flex;
  align-items: center;
  height: 24px;
  padding-left: 24px;
  color: #1a1a1a;
  white-space: nowrap;
}

.nav-row.l1 {
  padding-left: 32px;
}

.nav-row.gap {
  margin-top: 8px;
}

.nav-row.active {
  background: #d9d9d9;
}

.nav-text {
  margin-left: 5px;
}

.pin {
  width: 12px;
  height: 12px;
  margin-left: auto;
  margin-right: 4px;
}

.vbar {
  display: flex;
  flex-direction: column;
  flex: none;
  width: 15px;
  background: #f0f0f0;
}

.vbar-btn {
  display: flex;
  align-items: center;
  justify-content: center;
  height: 17px;
  flex: none;
}

.vbar-btn svg {
  width: 9px;
  height: 6px;
}

.vbar-track {
  flex: 1;
  padding-top: 65px;
  padding-bottom: 7px;
  min-height: 0;
}

.vbar-thumb {
  height: 100%;
  background: #c8c8c8;
}

.rule {
  width: 1px;
  margin-left: 3px;
  background: #efefef;
  flex: none;
}

.list {
  display: flex;
  flex-direction: column;
  width: 638px;
  flex: none;
  margin-left: 1px;
  overflow: hidden;
}

.list-head {
  position: relative;
  display: flex;
  flex: none;
  height: 24px;
  margin-top: 2px;
  color: #4c607a;
  white-space: nowrap;
  line-height: 25px;
}

.col {
  box-sizing: border-box;
  border-right: 1px solid #e5e5e5;
  padding-left: 6px;
  flex: none;
}

.col.name {
  width: 351px;
  padding-left: 17px;
}

.col.date {
  width: 144px;
}

.col.type {
  width: 121px;
}

.col.size {
  width: 21px;
  overflow: hidden;
  border-right: 0;
}

.sort {
  position: absolute;
  left: 175px;
  top: -1px;
  width: 10px;
  height: 6px;
}

.list-body {
  flex: 1;
  min-height: 0;
  padding: 8px 0 0 14px;
  overflow: hidden;
}

.frow {
  display: flex;
  align-items: center;
  box-sizing: border-box;
  height: 21px;
  width: 624px;
  border: 1px solid transparent;
  white-space: nowrap;
}

.frow.sel {
  background: #cce8ff;
  border-color: #99d1ff;
}

.f-name {
  display: flex;
  align-items: center;
  flex: none;
  width: 335px;
  padding-left: 3px;
  box-sizing: border-box;
  overflow: hidden;
  color: #000;
}

.f-name .i16 {
  margin-right: 4px;
}

.f-name .lat {
  font-size: 12.500px;
}

.f-date {
  flex: none;
  width: 144px;
  padding-left: 7px;
  box-sizing: border-box;
  color: #6d6d6d;
}

.f-type {
  flex: none;
  width: 121px;
  padding-left: 6px;
  box-sizing: border-box;
  color: #6d6d6d;
}

/* the size column is cut off by the preview pane, only its first digit shows */
.f-size {
  display: flex;
  flex: none;
  width: 22px;
  overflow: hidden;
  color: #6d6d6d;
}

.f-size span {
  flex: none;
  width: 72px;
  text-align: right;
}

.hbar {
  display: flex;
  flex: none;
  height: 17px;
  background: #f0f0f0;
}

.hbar-btn {
  display: flex;
  align-items: center;
  justify-content: center;
  width: 17px;
  flex: none;
}

.hbar-btn svg {
  width: 6px;
  height: 9px;
}

.hbar-track {
  flex: 1;
  padding-right: 59px;
}

.hbar-thumb {
  height: 100%;
  background: #cdcdcd;
}

.preview {
  flex: 1;
  padding-top: 226px;
  text-align: center;
  color: #6d6d6d;
  line-height: 20px;
}

.status {
  display: flex;
  align-items: center;
  flex: none;
  height: 23px;
  padding: 0 0 2px 15px;
  box-sizing: border-box;
  color: #4a4a4a;
  word-spacing: 1px;
}

.status .lat {
  font-size: 12.500px;
}

.st {
  white-space: pre;
}

.st-sep {
  width: 1px;
  height: 14px;
  margin: 0 9.500px;
  background: #ececec;
}

.st-size {
  margin-left: 7px;
}

.views {
  display: flex;
  align-items: center;
  margin-left: auto;
  margin-right: 5px;
}

.view {
  display: flex;
  align-items: center;
  justify-content: center;
  box-sizing: border-box;
  width: 22px;
  height: 23px;
}

.view.on {
  background: #cce8ff;
  border: 1px solid #26a0da;
}

.view svg {
  width: 16px;
  height: 16px;
}

.view:not(.on) svg {
  width: 14px;
  height: 11px;
}

/* context menu */
.menu {
  position: absolute;
  left: 593px;
  top: 341px;
  box-sizing: border-box;
  width: 287px;
  height: 489px;
  padding: 4px 2px;
  border: 1px solid #a0a0a0;
  background: #eeeeee;
  box-shadow: 3px 3px 4px rgba(0, 0, 0, 0.3);
  color: #111;
}

.item {
  position: relative;
  height: 23px;
  line-height: 23px;
  padding-left: 31px;
  white-space: pre;
}

.item.bold {
  font-weight: 700;
}

.item.hot {
  background: #fff;
}

.m-icon {
  position: absolute;
  left: 7px;
  top: 2px;
  width: 18px;
  height: 18px;
}

.m-icon.defender {
  width: 20px;
  height: 20px;
  top: 1px;
}

.m-more {
  position: absolute;
  right: 9px;
  top: 4px;
  width: 8px;
  height: 14px;
}

.sep {
  height: 1px;
  margin: 3px 8px;
  background: #a0a0a0;
}

/* taskbar */
.taskbar {
  position: absolute;
  left: 0;
  right: 0;
  bottom: 0;
  display: flex;
  height: 40px;
  background: linear-gradient(90deg, #1e3b48 0, #1f3b48 55%, #1a2c48 100%);
  color: #fff;
}

.start {
  display: flex;
  align-items: center;
  justify-content: center;
  width: 48px;
  flex: none;
}

.start svg {
  width: 16px;
  height: 16px;
}

.t-search {
  position: relative;
  display: flex;
  align-items: center;
  box-sizing: border-box;
  width: 288px;
  flex: none;
  margin-top: 1px;
  padding-left: 11px;
  border: 1px solid #d0d0d0;
  border-width: 1px 0 1px 1px;
  background: #f3f3f3;
  color: #222;
  font-size: 14px;
}

.t-word {
  padding-bottom: 1px;
}

.t-glass {
  width: 16px;
  height: 16px;
  margin-right: 12px;
}

.scene {
  position: absolute;
  right: 0;
  bottom: 0;
  width: 78px;
  height: 39px;
}

.tb-btn {
  position: relative;
  display: flex;
  align-items: center;
  justify-content: center;
  width: 49px;
  flex: none;
}

.tb-btn.tv-btn {
  width: 50px;
}

.tb-btn.active {
  background: #4d6068;
}

.tb-btn.run::after {
  content: "";
  position: absolute;
  left: 4px;
  right: 4px;
  bottom: 0;
  height: 2px;
  background: #9fd0f0;
}

.tb-btn.active::after {
  left: 0;
  right: 0;
}

.tv {
  width: 16px;
  height: 16px;
}

.app {
  width: 25px;
  height: 25px;
}

.tray {
  position: relative;
  flex: 1;
  display: flex;
  align-items: center;
  padding-left: 371px;
  font-size: 14px;
  white-space: nowrap;
  color: #f0f0f0;
}

.weather {
  width: 26px;
  height: 20px;
}

.tr-temp {
  margin-left: 7px;
}

.tr-rain {
  margin-left: 9px;
}

.tr-up {
  width: 12px;
  height: 7px;
  margin-left: 26px;
}

.tr-net {
  width: 16px;
  height: 16px;
  margin-left: 10px;
}

.tr-vol {
  width: 16px;
  height: 16px;
  margin-left: 8px;
}

.tr-ime {
  margin-left: 6px;
  font-size: 15px;
}

.clock {
  width: 80px;
  margin-left: 1px;
  text-align: center;
  font-size: 12px;
  line-height: 19px;
}

.tr-note {
  width: 16px;
  height: 16px;
  margin-left: 8px;
}

.show-desktop {
  position: absolute;
  right: 4px;
  top: 0;
  bottom: 0;
  width: 1px;
  background: #53616f;
}
</style>
